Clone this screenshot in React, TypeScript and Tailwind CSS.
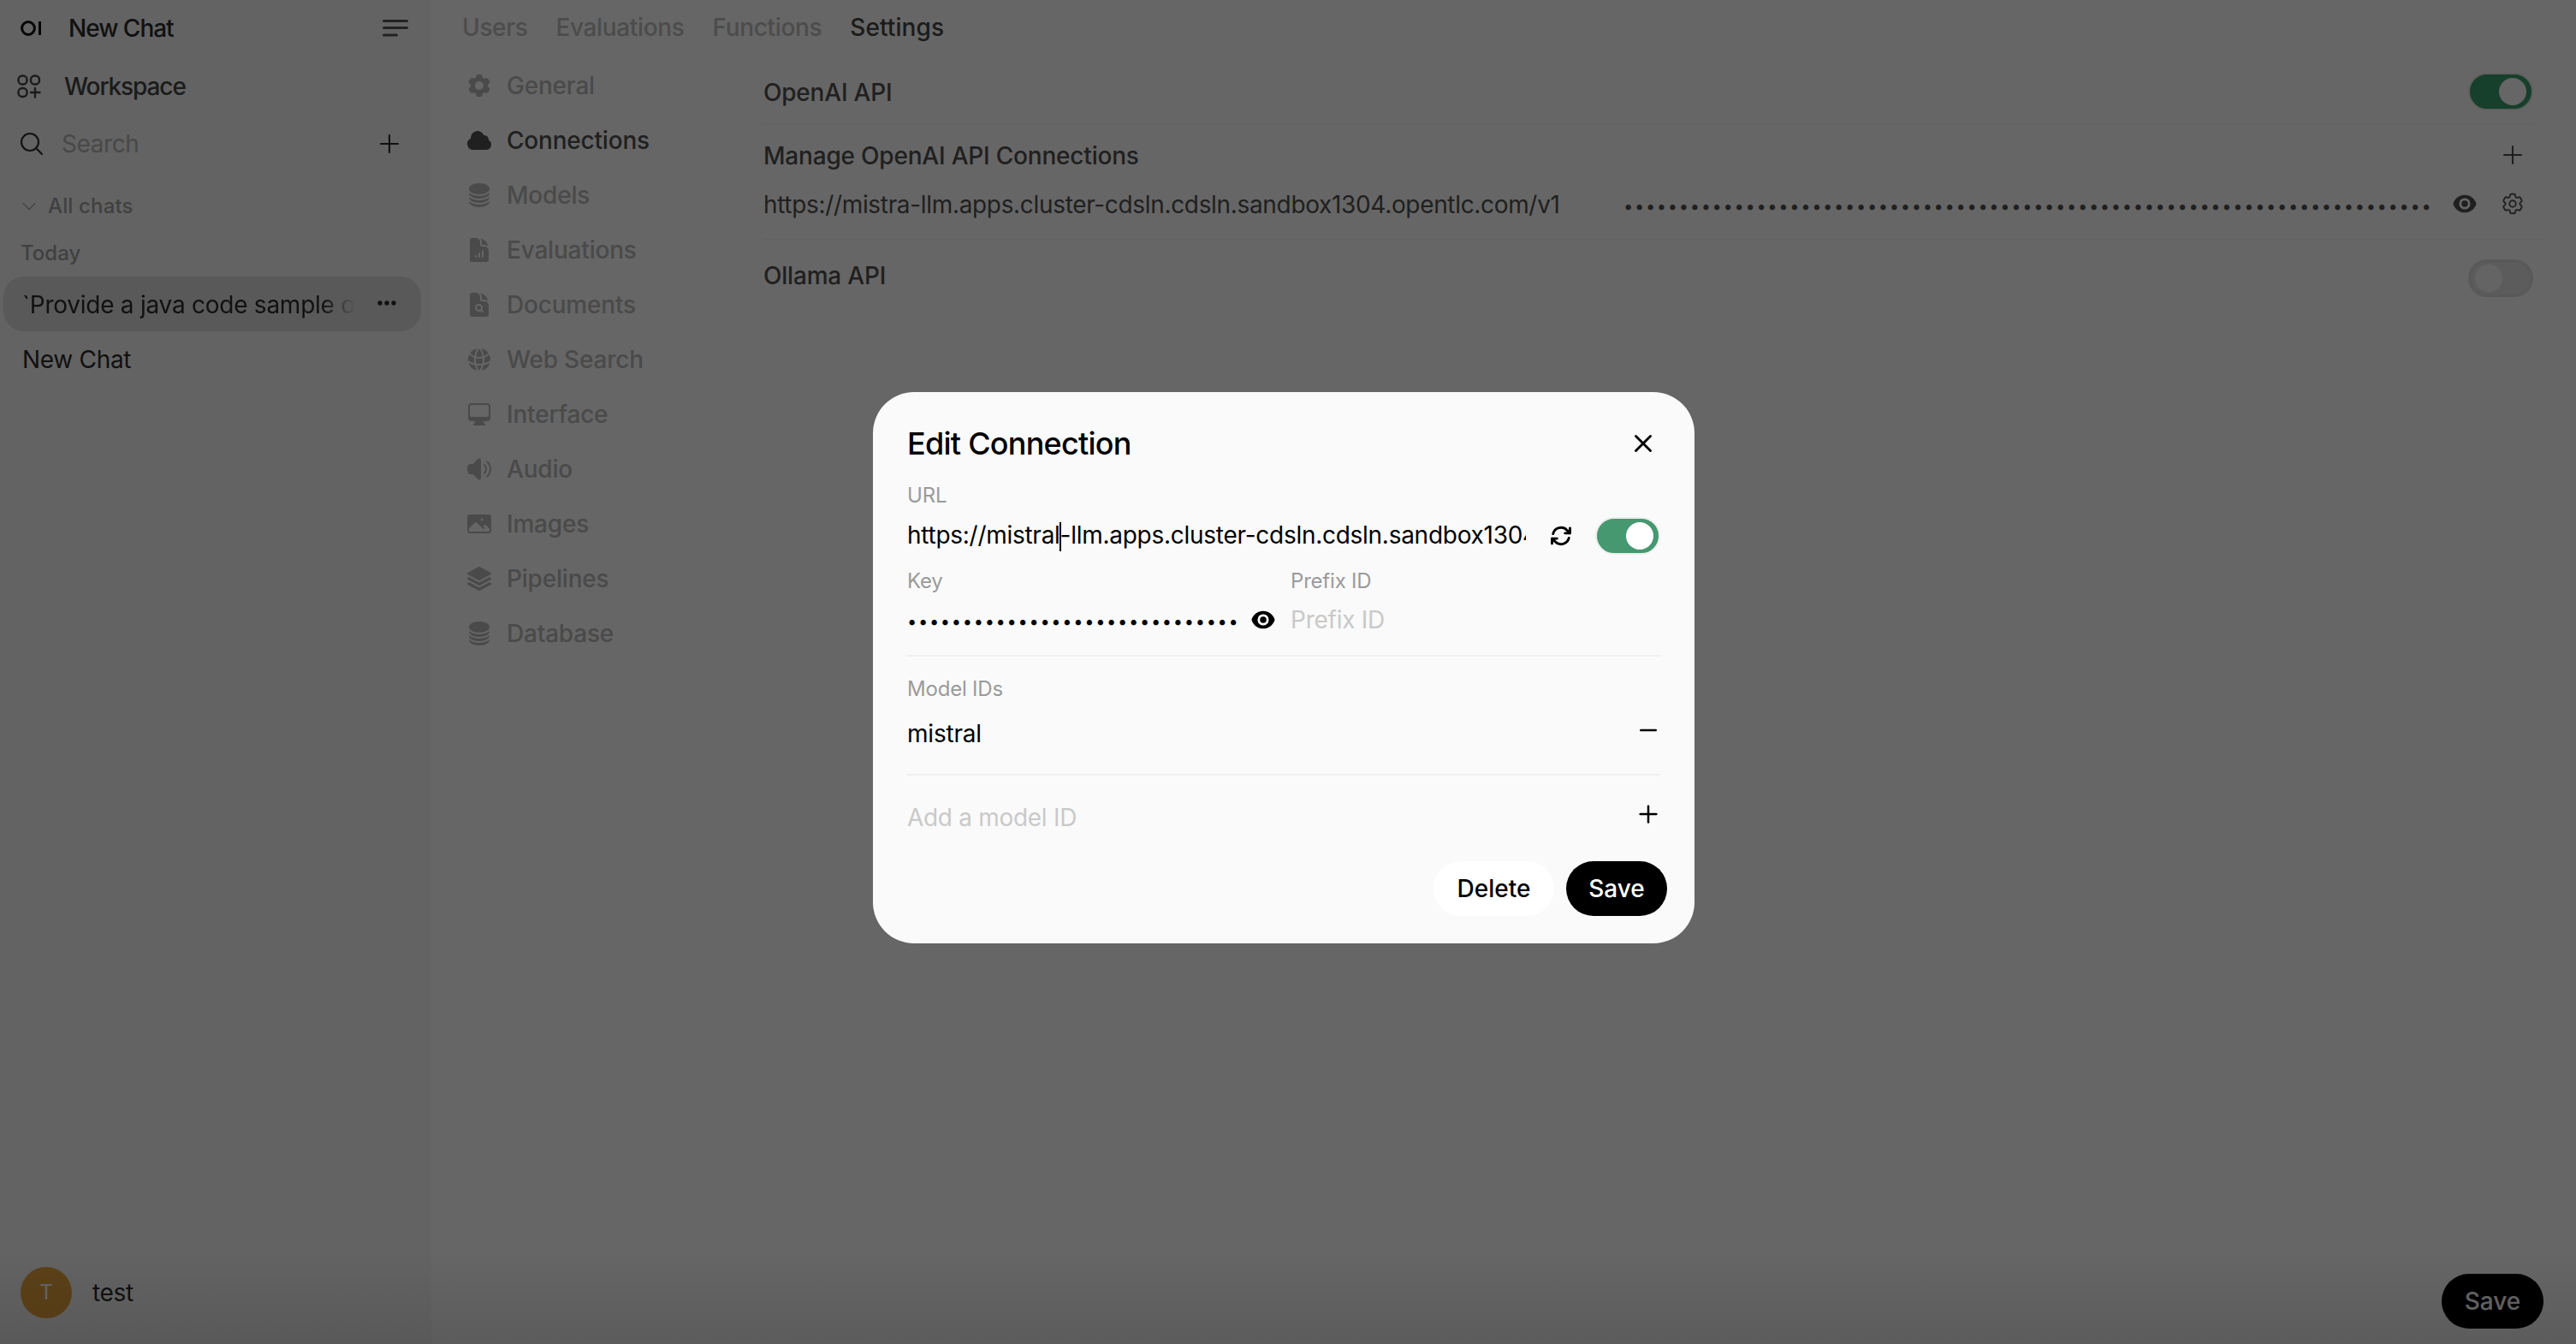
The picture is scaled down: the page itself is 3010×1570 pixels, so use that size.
import React from "react";
import {
  HiCog6Tooth, HiCloud, HiCircleStack, HiDocumentChartBar, HiDocumentMagnifyingGlass, HiGlobeAlt,
  HiComputerDesktop, HiSpeakerWave, HiPhoto, HiSquare3Stack3D, HiEye, HiOutlineCog6Tooth,
  HiOutlineMagnifyingGlass, HiOutlinePlus, HiOutlineMinus, HiOutlineXMark, HiOutlineArrowPath, HiChevronDown, HiEllipsisHorizontal,
} from "react-icons/hi2";

const nav = [
  ["General", HiCog6Tooth], ["Connections", HiCloud], ["Models", HiCircleStack], ["Evaluations", HiDocumentChartBar],
  ["Documents", HiDocumentMagnifyingGlass], ["Web Search", HiGlobeAlt], ["Interface", HiComputerDesktop],
  ["Audio", HiSpeakerWave], ["Images", HiPhoto], ["Pipelines", HiSquare3Stack3D], ["Database", HiCircleStack],
] as const;

const dots = (n: number) => "•".repeat(n);

function Sidebar() {
  return (
    <aside className="w-[504px] shrink-0 h-full bg-[#f8f8f8] flex flex-col px-[4px]">
      <div className="h-[66px] flex items-center pl-[20px] pr-[23px]">
        <svg viewBox="0 0 25 18" className="w-[25px] h-[18px] text-[#111]" fill="none">
          <circle cx="9" cy="9" r="7.4" stroke="currentColor" strokeWidth="3" />
          <rect x="21" y="1" width="3" height="16" fill="currentColor" />
        </svg>
        <span className="ml-[31px] text-[28px] font-medium tracking-[-1px] text-[#2b2b2b]">New Chat</span>
        <svg viewBox="0 0 30 22" className="ml-auto w-[30px] h-[22px] text-[#555]" fill="none" stroke="currentColor" strokeWidth="3" strokeLinecap="round">
          <path d="M1.5 2.5h27M1.5 10.5h27M1.5 19h15" />
        </svg>
      </div>
      <div className="h-[70px] flex items-center pl-[16px]">
        <svg viewBox="0 0 28 28" className="w-[28px] h-[28px] text-[#444]" fill="none" stroke="currentColor" strokeWidth="2.4" strokeLinecap="round">
          <rect x="1.5" y="1.5" width="10" height="10" rx="4.5" />
          <rect x="16" y="1.5" width="10" height="10" rx="4.5" />
          <rect x="1.5" y="16" width="10" height="10" rx="4.5" />
          <path d="M21 16v10.5M16 21h10.5" />
        </svg>
        <span className="ml-[27px] text-[28px] font-medium tracking-[-1.1px] text-[#444]">Workspace</span>
      </div>
      <div className="h-[64px] flex items-center pl-[17px] pr-[29px]">
        <HiOutlineMagnifyingGlass className="w-[32px] h-[32px] text-[#2b2b2b] stroke-[1.6]" />
        <span className="ml-[19px] text-[28px] tracking-[-0.4px] text-[#b4b4b4]">Search</span>
        <HiOutlinePlus className="ml-auto w-[32px] h-[32px] text-[#2b2b2b] stroke-[1.6]" />
      </div>
      <div className="mt-[21px] h-[40px] flex items-center pl-[19px]">
        <HiChevronDown className="w-[22px] h-[22px] text-[#aaa]" />
        <span className="ml-[11px] text-[24px] font-medium tracking-[0.15px] text-[#a0a0a0]">All chats</span>
      </div>
      <div className="mt-[17px] h-[36px] flex items-center pl-[20px] text-[24px] font-medium text-[#a0a0a0]">Today</div>
      <div className="mt-[9px] h-[64px] w-[488px] rounded-[24px] bg-[#dedede] flex items-center pl-[22px] pr-[24px]">
        <span className="w-[389px] mt-[1px] whitespace-nowrap overflow-hidden text-[28px] tracking-[-0.25px] text-[#2b2b2b] [mask-image:linear-gradient(to_right,black_90%,transparent)]">`Provide a java code sample of a REST</span>
        <HiEllipsisHorizontal className="ml-auto w-[32px] h-[32px] -translate-y-[1px] text-[#2b2b2b] stroke-[1]" />
      </div>
      <div className="mt-[1px] h-[64px] flex items-center pl-[22px] text-[28px] tracking-[-0.3px] text-[#2b2b2b]">New Chat</div>
      <div className="mt-auto mb-[30px] flex items-center pl-[20px]">
        <div className="w-[60px] h-[60px] rounded-full bg-[#e6a23c] flex items-center justify-center text-[24px] text-white">T</div>
        <span className="ml-[24px] text-[28px] tracking-[-0.3px] text-[#2b2b2b]">test</span>
      </div>
    </aside>
  );
}

function SwitchOn({ fill }: { fill: string }) {
  return (
    <div className={`w-[76px] h-[44px] rounded-full border-[2px] border-[#eeeeee] flex items-center justify-end pr-[6px] ${fill}`}>
      <div className="w-[32px] h-[32px] rounded-full bg-white" />
    </div>
  );
}

function Main() {
  return (
    <main className="flex-1 min-w-0 h-full flex flex-col relative">
      <div className="h-[64px] shrink-0 flex items-center pl-[36px] gap-[33px] text-[28px] font-medium tracking-[-0.35px] text-[#bebebe]">
        <span>Users</span><span>Evaluations</span><span>Functions</span><span className="text-[#444] tracking-[0.1px]">Settings</span>
      </div>
      <div className="flex flex-1 min-h-0">
        <nav className="w-[388px] shrink-0 pl-[42px] pt-[4px] flex flex-col">
          {nav.map(([label, Icon], i) => (
            <div key={i} className={`h-[64px] flex items-center text-[28px] font-medium tracking-[-0.2px] ${label === "Connections" ? "text-[#505050]" : "text-[#b8b8b8]"}`}>
              <Icon className="w-[32px] h-[32px] -ml-[2px]" />
              <span className="ml-[16px]">{label}</span>
            </div>
          ))}
        </nav>
        <section className="flex-1 min-w-0 pt-[21px] pr-[50px] text-[28px] font-medium tracking-[-0.2px] text-[#505050]">
          <div className="h-[44px] flex items-center justify-between">
            <span className="mt-[2px]">OpenAI API</span>
            <SwitchOn fill="bg-[#399d6e]" />
          </div>
          <div className="mt-[15px] h-[1px] bg-[#f2f2f2]" />
          <div className="mt-[18px] h-[36px] flex items-center justify-between">
            <span className="mt-[1px]">Manage OpenAI API Connections</span>
            <HiOutlinePlus className="mr-[8px] w-[32px] h-[32px] stroke-[1.6]" />
          </div>
          <div className="mt-[17px] h-[44px] flex items-center font-normal">
            <span className="w-[1005px] mt-[1px] shrink-0 tracking-[-0.33px]">https://mistra-llm.apps.cluster-cdsln.cdsln.sandbox1304.opentlc.com/v1</span>
            <span className="w-[948px] shrink-0 whitespace-nowrap text-[20px] tracking-[1.7px] mt-[6px]">{dots(73)}</span>
            <HiEye className="ml-[20px] w-[30px] h-[30px] shrink-0" />
            <HiOutlineCog6Tooth className="ml-[26px] w-[30px] h-[30px] shrink-0 stroke-[1.5] text-[#505050]" />
          </div>
          <div className="mt-[19px] h-[1px] bg-[#f2f2f2] -mr-[12px]" />
          <div className="mt-[23px] h-[44px] flex items-center justify-between">
            <span className="-mt-[6px]">Ollama API</span>
            <div className="w-[76px] h-[44px] rounded-full border-[4px] border-[#dfdfdf] bg-[#e6e6e6] flex items-center pl-[4px]">
              <div className="w-[32px] h-[32px] rounded-full bg-[#fbfbfb]" />
            </div>
          </div>
        </section>
      </div>
      <div className="absolute right-[38px] bottom-[18px] h-[64px] w-[119px] rounded-full bg-black flex items-center justify-center text-[28px] font-medium text-white">Save</div>
    </main>
  );
}

function Label({ children }: { children: React.ReactNode }) {
  return <div className="h-[32px] flex items-center text-[24px] tracking-[-0.2px] text-[#9a9a9a]">{children}</div>;
}

function Modal() {
  return (
    <div className="relative mr-[10px] mb-[10px] w-[960px] h-[644px] rounded-[48px] bg-[#fafafa] pt-[38px] px-[40px] text-[28px] text-black">
      <div className="h-[44px] flex items-center justify-between">
        <span className="text-[36px] font-medium tracking-[-0.75px]">Edit Connection</span>
        <HiOutlineXMark className="mr-[3px] w-[34px] h-[34px] stroke-[2]" />
      </div>
      <div className="mt-[23px]"><Label>URL</Label></div>
      <div className="mt-[9px] h-[44px] flex items-center">
        <div className="w-[723px] shrink-0 overflow-hidden whitespace-nowrap tracking-[-0.27px] -mt-[2px]">
          https://mistral<span className="inline-block w-[2px] h-[34px] -mx-[1px] align-middle bg-black" />-llm.apps.cluster-cdsln.cdsln.sandbox1304.opentlc.com/v1
        </div>
        <HiOutlineArrowPath className="ml-[27px] w-[28px] h-[28px] stroke-[2.5] shrink-0" />
        <div className="ml-auto"><SwitchOn fill="bg-[#469870]" /></div>
      </div>
      <div className="mt-[15px] flex">
        <div className="w-[448px] shrink-0">
          <Label>Key</Label>
          <div className="mt-[7px] h-[44px] flex items-center">
            <span className="w-[385px] shrink-0 whitespace-nowrap text-[20px] tracking-[1.7px] mt-[4px]">{dots(30)}</span>
            <HiEye className="ml-[16px] w-[30px] h-[30px] shrink-0" />
          </div>
        </div>
        <div className="flex-1">
          <Label>Prefix ID</Label>
          <div className="mt-[7px] h-[44px] flex items-center tracking-[-0.25px] text-[#c9c9c9]">Prefix ID</div>
        </div>
      </div>
      <div className="mt-[19px] h-[2px] bg-[#f0f0f0]" />
      <div className="mt-[22px]"><Label>Model IDs</Label></div>
      <div className="mt-[14px] h-[44px] flex items-center justify-between">
        <span className="tracking-[-0.2px]">mistral</span>
        <HiOutlineMinus className="-mt-[8px] -mr-[1px] w-[30px] h-[30px] stroke-[2]" />
      </div>
      <div className="mt-[25px] h-[2px] bg-[#f0f0f0]" />
      <div className="mt-[27px] h-[44px] flex items-center justify-between">
        <span className="tracking-[-0.3px] text-[#c9c9c9]">Add a model ID</span>
        <HiOutlinePlus className="-mt-[8px] -mr-[1px] w-[30px] h-[30px] stroke-[2]" />
      </div>
      <div className="mt-[29px] -mr-[8px] flex justify-end gap-[14px] font-medium">
        <div className="w-[141px] h-[64px] rounded-full bg-white flex items-center justify-center">Delete</div>
        <div className="w-[118px] h-[64px] rounded-full bg-black text-white flex items-center justify-center">Save</div>
      </div>
    </div>
  );
}

export default function App() {
  return (
    <div className="w-[3010px] h-[1570px] bg-white relative overflow-hidden flex font-['Inter',sans-serif]">
      <Sidebar />
      <Main />
      <div className="absolute inset-0 bg-black/60 flex items-center justify-center">
        <div className="absolute left-0 right-0 bottom-0 h-[110px] bg-gradient-to-t from-black/10 to-transparent" />
        <Modal />
      </div>
    </div>
  );
}
